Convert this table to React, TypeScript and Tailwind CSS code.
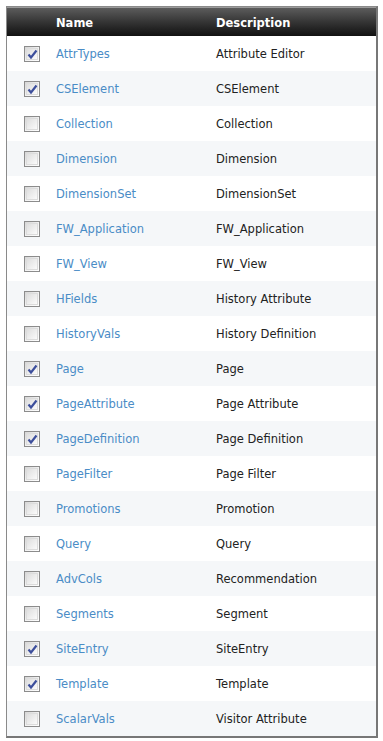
import React from "react";

const rows: [string, string, boolean][] = [
  ["AttrTypes", "Attribute Editor", true],
  ["CSElement", "CSElement", true],
  ["Collection", "Collection", false],
  ["Dimension", "Dimension", false],
  ["DimensionSet", "DimensionSet", false],
  ["FW_Application", "FW_Application", false],
  ["FW_View", "FW_View", false],
  ["HFields", "History Attribute", false],
  ["HistoryVals", "History Definition", false],
  ["Page", "Page", true],
  ["PageAttribute", "Page Attribute", true],
  ["PageDefinition", "Page Definition", true],
  ["PageFilter", "Page Filter", false],
  ["Promotions", "Promotion", false],
  ["Query", "Query", false],
  ["AdvCols", "Recommendation", false],
  ["Segments", "Segment", false],
  ["SiteEntry", "SiteEntry", true],
  ["Template", "Template", true],
  ["ScalarVals", "Visitor Attribute", false],
];

function Box({ checked }: { checked: boolean }) {
  return (
    <div className="w-[16px] h-[16px] border border-[#8c8c8c] bg-gradient-to-br from-[#d4d4d4] via-[#f2f2f2] to-[#ffffff] p-[1px] relative">
      <div className="w-full h-full border border-[#dcdcdc] bg-gradient-to-br from-[#dedede] to-[#fbfbfb]" />
      {checked && (
        <svg className="absolute left-[2px] top-[2px]" width="11" height="11" viewBox="0 0 11 11">
          <path d="M1.5 5.5 L4 8.5 L9.5 1.5" fill="none" stroke="#3d4f9c" strokeWidth="2.2" strokeLinejoin="miter" />
        </svg>
      )}
    </div>
  );
}

export default function App() {
  return (
    <div className="w-[383px] h-[741px] bg-white pt-[6px] pl-[6px]" style={{ fontFamily: "Tahoma, 'DejaVu Sans', sans-serif" }}>
      <div className="w-[372px] border-t border-l border-[#8a8a8a] border-r-2 border-r-[#777] border-b-2 border-b-[#777]">
        <div className="h-[29px] flex items-center bg-gradient-to-b from-[#5c5c5c] to-[#121212] border-t border-[#9a9a9a] text-white font-bold text-[11.5px]">
          <div className="w-[49px]" />
          <div className="w-[160px] pt-[3px]">Name</div>
          <div className="pt-[3px]">Description</div>
        </div>
        {rows.map(([name, desc, checked], i) => (
          <div key={name} className={`h-[35px] flex items-center text-[11.5px] ${i % 2 === 0 ? "bg-white" : "bg-[#f5f7f9]"}`}>
            <div className="w-[49px] pl-[17px]">
              <Box checked={checked} />
            </div>
            <div className="w-[160px] pt-[3px] text-[#4a8cc6]">{name}</div>
            <div className="pt-[3px] text-[#222]">{desc}</div>
          </div>
        ))}
      </div>
    </div>
  );
}
